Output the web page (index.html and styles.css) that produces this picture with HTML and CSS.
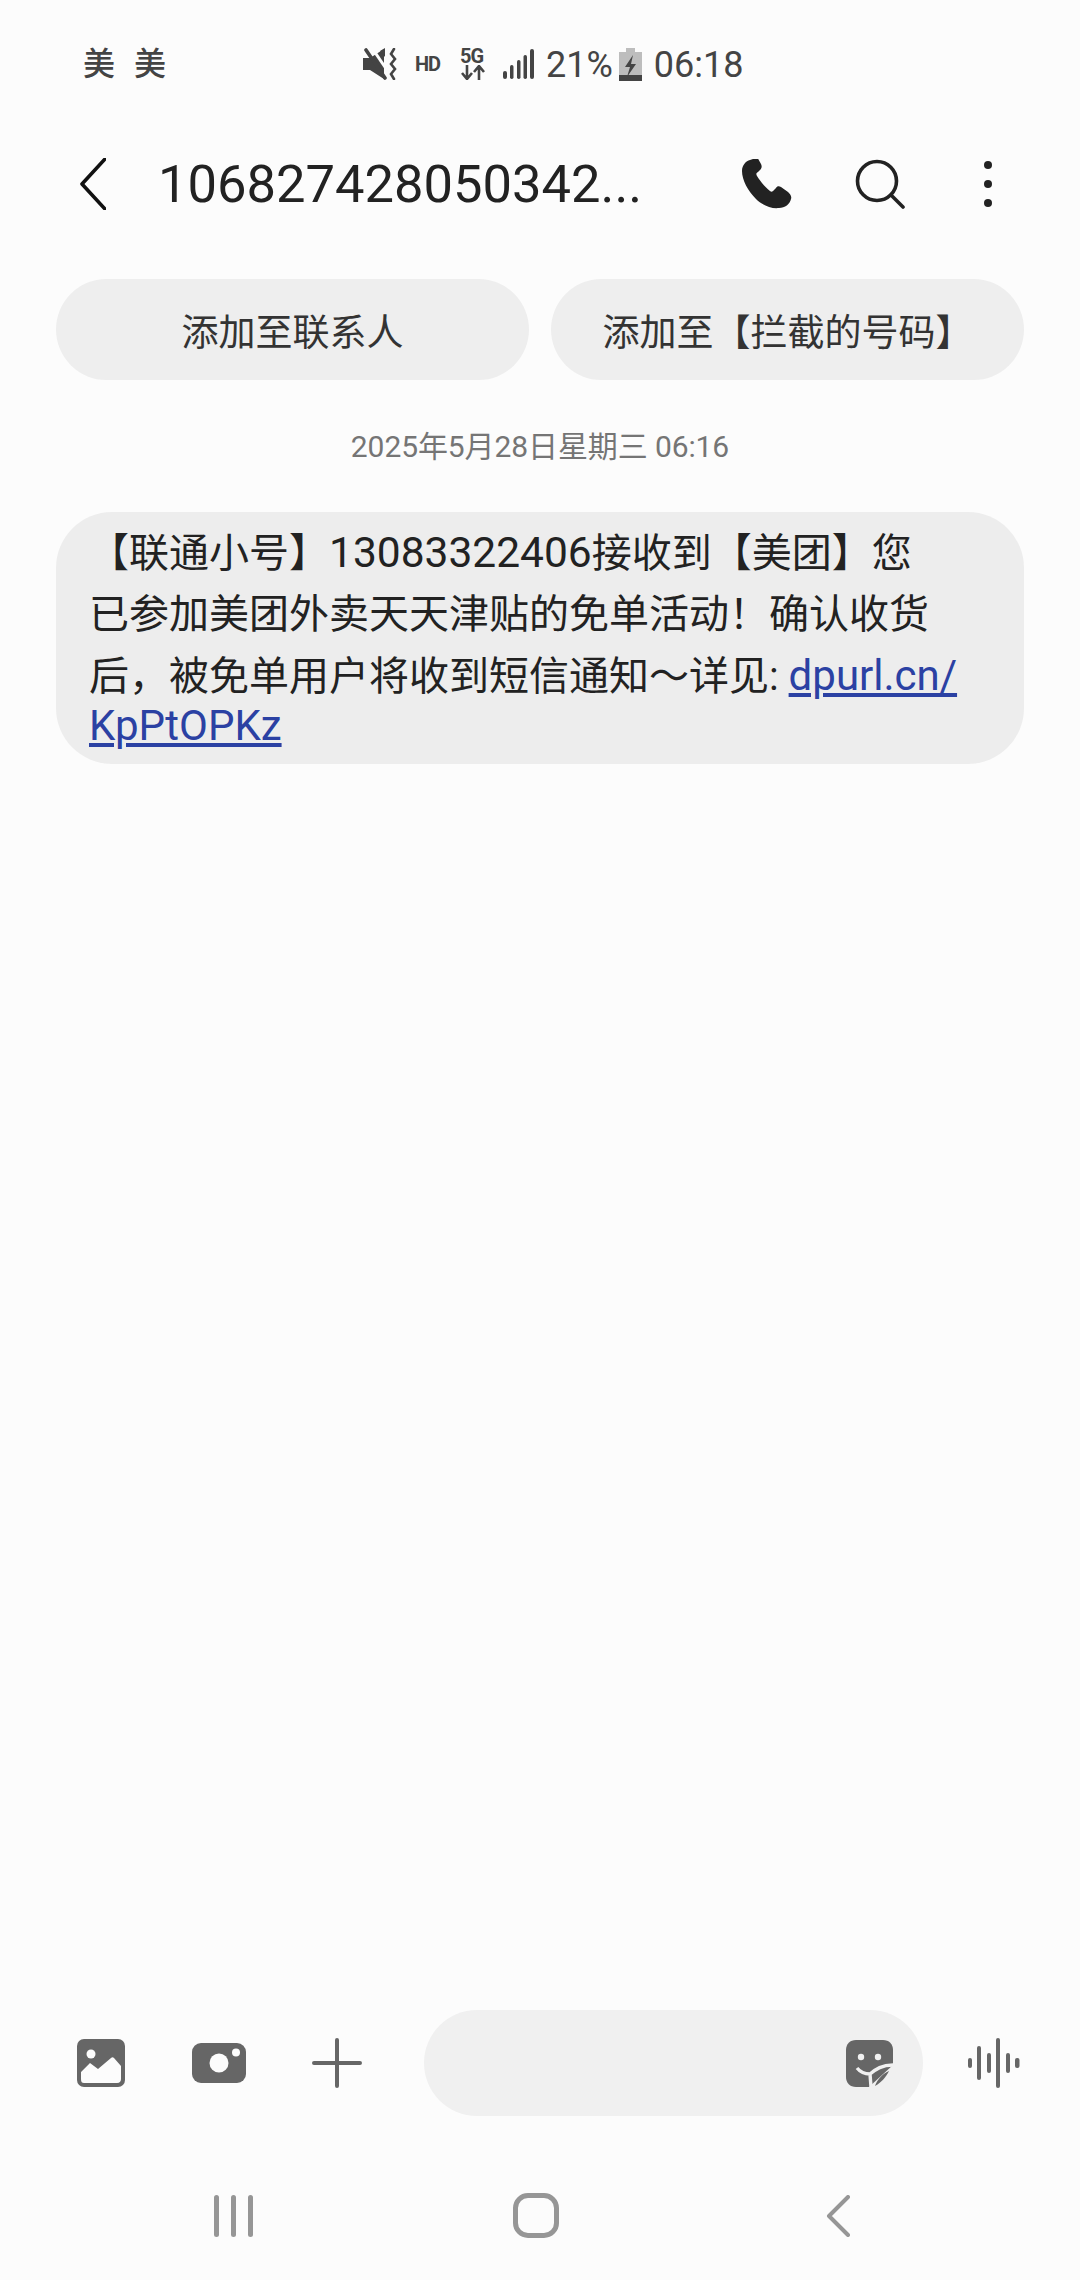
FILE: index.html
```html
<!DOCTYPE html>
<html lang="zh-CN">
<head>
  <meta charset="UTF-8" />
  <meta name="viewport" content="width=device-width, initial-scale=1.0"/>
  <title>短信</title>
  <link rel="stylesheet" href="styles.css">
</head>
<body>

<div class="status">
  <div class="carrier"><span>美</span><span>美</span></div>
  <div class="status-right">
    <svg class="ic-mute" viewBox="0 0 34 32"><path d="M0 10h7L21 1v30L7 22H0z" fill="#444"/><path d="M9 0l17 25" stroke="#fcfcfc" stroke-width="3"/><path d="M3 2l19 28" stroke="#444" stroke-width="3.600" stroke-linecap="round"/><path d="M17 3l5-3v9z" fill="#444"/><path d="M31 1l-3 5 4 5-4 5 4 5-4 5 3 5" fill="none" stroke="#444" stroke-width="2.600" stroke-linecap="round"/></svg>
    <span class="hd">HD</span>
    <div class="net">
      <span>5G</span>
      <svg viewBox="0 0 26 15"><path d="M7 0v13M2 8l5 6 5-6M19 15V2M14 7l5-6 5 6" fill="none" stroke="#444" stroke-width="2.6"/></svg>
    </div>
    <svg class="ic-signal" viewBox="0 0 31 30"><g fill="#444"><rect x="0" y="22" width="4" height="8" rx="2"/><rect x="7" y="16" width="3.5" height="14" rx="1.7"/><rect x="14" y="11" width="3.5" height="19" rx="1.7"/><rect x="20.5" y="6" width="3.5" height="24" rx="1.7"/><rect x="27" y="0" width="4" height="30" rx="2"/></g></svg>
    <span class="pct">21%</span>
    <svg class="ic-batt" viewBox="0 0 23 33"><path d="M7 0h9v4h7v29H0V4h7z" fill="#bdbdbd"/><rect y="27" width="23" height="6" fill="#444"/><path d="M14 7L6 19h5l-3 10 9-13h-5z" fill="#444"/></svg>
    <span class="clock">06:18</span>
  </div>
</div>

<div class="appbar">
  <svg class="ic-back" viewBox="0 0 26 52"><path d="M25 1L2 26l23 25" fill="none" stroke="#111" stroke-width="3.6" stroke-linecap="round" stroke-linejoin="round"/></svg>
  <div class="title">106827428050342...</div>
  <svg class="ic-phone" viewBox="0 0 51 50"><path d="M9 1C5 2 1 6 1 12c0 9 6 20 14 28 6 6 15 10 23 9 6 0 11-4 12-9 1-3-1-5-3-7l-7-5c-2-1-4-1-5 1l-3 3c-1 1-2 1-3 0-5-4-10-10-13-15-1-2-1-3 1-4l2-2c2-2 2-4 1-6l-5-9C13 1 11 0 9 1z" fill="#222"/></svg>
  <svg class="ic-search" viewBox="0 0 50 50"><circle cx="22" cy="22" r="19.5" fill="none" stroke="#222" stroke-width="3.6"/><path d="M36 36l12 12" stroke="#222" stroke-width="3.6" stroke-linecap="round"/></svg>
  <div class="dots"><i></i><i></i><i></i></div>
</div>

<div class="chips">
  <div class="chip">添加至联系人</div>
  <div class="chip">添加至【拦截的号码】</div>
</div>

<div class="date">2025年5月28日星期三 06:16</div>

<div class="bubble">
  <div class="msg-lines">【联通小号】<span class="num">13083322406</span>接收到【美团】您<br>已参加美团外卖天天津贴的免单活动！确认收货<br>后，被免单用户将收到短信通知～详见: <a class="link">dpurl.cn/</a></div>
  <div class="msg-tail"><a class="link">KpPtOPKz</a></div>
</div>

<div class="spacer"></div>

<div class="composer">
  <svg class="ic-pic" viewBox="0 0 48 48"><rect width="48" height="48" rx="7" fill="#666"/><circle cx="14" cy="15" r="4.5" fill="#fcfcfc"/><path d="M4 33l9-9 8 6 13-11c1-1 2-1 3 0l7 8v13c0 2-1 4-4 4H7c-2 0-3-1-3-4z" fill="#fcfcfc"/></svg>
  <svg class="ic-cam" viewBox="0 0 54 40"><rect width="54" height="40" rx="9" fill="#666"/><circle cx="27" cy="20" r="9.5" fill="#fcfcfc"/><circle cx="44" cy="9.500" r="4" fill="#fcfcfc"/></svg>
  <svg class="ic-plus" viewBox="0 0 50 50"><path d="M25 2v46M2 25h46" stroke="#666" stroke-width="4" stroke-linecap="round"/></svg>
  <div class="input">
    <svg class="ic-sticker" viewBox="0 0 47 47"><path d="M10 0h27c6 0 10 4 10 10v15L23 47H10C4 47 0 43 0 37V10C0 4 4 0 10 0z" fill="#666"/><circle cx="15" cy="17" r="3.200" fill="#f0f0f0"/><circle cx="32" cy="17" r="3.200" fill="#f0f0f0"/><path d="M11 28c4 5 9 6 13 6 6-5 12-9 23-9M24 34l1 13" fill="none" stroke="#f0f0f0" stroke-width="3.400"/><path d="M29 46c2-6 7-12 14-15-3 6-7 11-14 15z" fill="#666"/></svg>
  </div>
  <svg class="ic-voice" viewBox="0 0 52 50"><g fill="#666"><rect x="0" y="20" width="4" height="10" rx="2"/><rect x="9" y="8" width="4" height="34" rx="2"/><rect x="19" y="15" width="4" height="20" rx="2"/><rect x="28" y="0" width="4" height="50" rx="2"/><rect x="38" y="15" width="4" height="20" rx="2"/><rect x="47" y="20" width="4.500" height="10" rx="2"/></g></svg>
</div>

<div class="navbar">
  <div class="nav-recent"><i></i><i></i><i></i></div>
  <div class="nav-home"></div>
  <svg class="ic-navback" viewBox="0 0 24 42"><path d="M22 2L3 21l19 19" fill="none" stroke="#969696" stroke-width="4" stroke-linecap="round" stroke-linejoin="round"/></svg>
</div>

</body>
</html>
```

FILE: styles.css
```css
* {
  box-sizing: border-box;
}

html, body {
  margin: 0;
  padding: 0;
}

body {
  width: 1080px;
  height: 2280px;
  background: #fcfcfc;
  color: #222;
  font-family: Roboto, "Noto Sans CJK SC", sans-serif;
  display: flex;
  flex-direction: column;
  overflow: hidden;
}

svg {
  display: block;
  flex: none;
}

/* status bar */
.status {
  height: 128px;
  padding: 44px 0 0 83px;
  display: flex;
  align-items: flex-start;
  color: #444;
}

.carrier {
  width: 280px;
  display: flex;
  gap: 19px;
  font-size: 32px;
  line-height: 40px;
  font-weight: 500;
}

.status-right {
  display: flex;
  align-items: center;
  height: 40px;
}

.ic-mute {
  width: 34px;
  height: 32px;
}

.hd {
  margin-left: 18px;
  width: 28px;
  font-size: 20px;
  font-weight: 700;
  letter-spacing: -1px;
}

.net {
  margin-left: 17px;
  width: 26px;
  font-size: 20px;
  line-height: 17px;
  font-weight: 700;
  letter-spacing: -1px;
}

.net svg {
  width: 26px;
  height: 15px;
}

.ic-signal {
  margin-left: 17px;
  width: 31px;
  height: 30px;
}

.pct, .clock {
  font-size: 36px;
  line-height: 40px;
  margin-top: 2px;
}

.pct {
  margin-left: 12px;
}

.ic-batt {
  margin-left: 6px;
  width: 23px;
  height: 33px;
}

.clock {
  margin-left: 12px;
}

/* title row */
.appbar {
  height: 111px;
  display: flex;
  align-items: center;
  padding: 0 0 0 80px;
}

.ic-back {
  width: 26px;
  height: 52px;
}

.title {
  margin-left: 52px;
  width: 583px;
  font-size: 52.5px;
  color: #222;
  white-space: nowrap;
}

.ic-phone {
  width: 51px;
  height: 50px;
}

.ic-search {
  margin-left: 63px;
  width: 50px;
  height: 50px;
}

.dots {
  margin-left: 79px;
  display: flex;
  flex-direction: column;
  gap: 11px;
}

.dots i {
  display: block;
  width: 8px;
  height: 8px;
  border-radius: 50%;
  background: #222;
}

/* action chips */
.chips {
  margin-top: 40px;
  padding: 0 56px;
  display: flex;
  gap: 22px;
}

.chip {
  flex: 1;
  height: 101px;
  border-radius: 51px;
  background: #eeeeee;
  font-size: 37px;
  color: #333;
  display: flex;
  align-items: center;
  justify-content: center;
}

.date {
  margin-top: 46px;
  text-align: center;
  font-size: 30px;
  line-height: 42px;
  letter-spacing: -0.1px;
  color: #757575;
}

/* message */
.bubble {
  margin: 44px 56px 0;
  height: 252px;
  padding: 10px 50px 0 33px;
  border-radius: 56px;
  background: #ededed;
  font-size: 40px;
  color: #222;
  white-space: nowrap;
}

.msg-lines {
  line-height: 61px;
}

.msg-tail {
  line-height: 51px;
  margin-top: -7px;
}

.num {
  font-size: 42.5px;
}

.link {
  font-size: 42px;
  color: #2b41a3;
  text-decoration: underline;
}

.spacer {
  flex: 1;
}

/* composer */
.composer {
  height: 106px;
  padding-left: 77px;
  display: flex;
  align-items: center;
}

.ic-pic {
  width: 48px;
  height: 48px;
}

.ic-cam {
  margin-left: 67px;
  width: 54px;
  height: 40px;
}

.ic-plus {
  margin-left: 66px;
  width: 50px;
  height: 50px;
}

.input {
  margin-left: 62px;
  width: 499px;
  height: 106px;
  border-radius: 53px;
  background: #f0f0f0;
  display: flex;
  align-items: center;
  justify-content: flex-end;
  padding-right: 30px;
}

.ic-sticker {
  width: 47px;
  height: 47px;
}

.ic-voice {
  margin-left: 45px;
  width: 52px;
  height: 50px;
}

/* nav bar */
.navbar {
  height: 164px;
  padding: 79px 0 0 214px;
  display: flex;
  align-items: flex-start;
}

.nav-recent {
  width: 39px;
  height: 42px;
  display: flex;
  justify-content: space-between;
}

.nav-recent i {
  display: block;
  width: 5px;
  border-radius: 3px;
  background: #969696;
}

.nav-home {
  margin: -2px 0 0 260px;
  width: 46px;
  height: 45px;
  border: 5px solid #969696;
  border-radius: 15px;
}

.ic-navback {
  margin-left: 267px;
  width: 24px;
  height: 42px;
}
```
